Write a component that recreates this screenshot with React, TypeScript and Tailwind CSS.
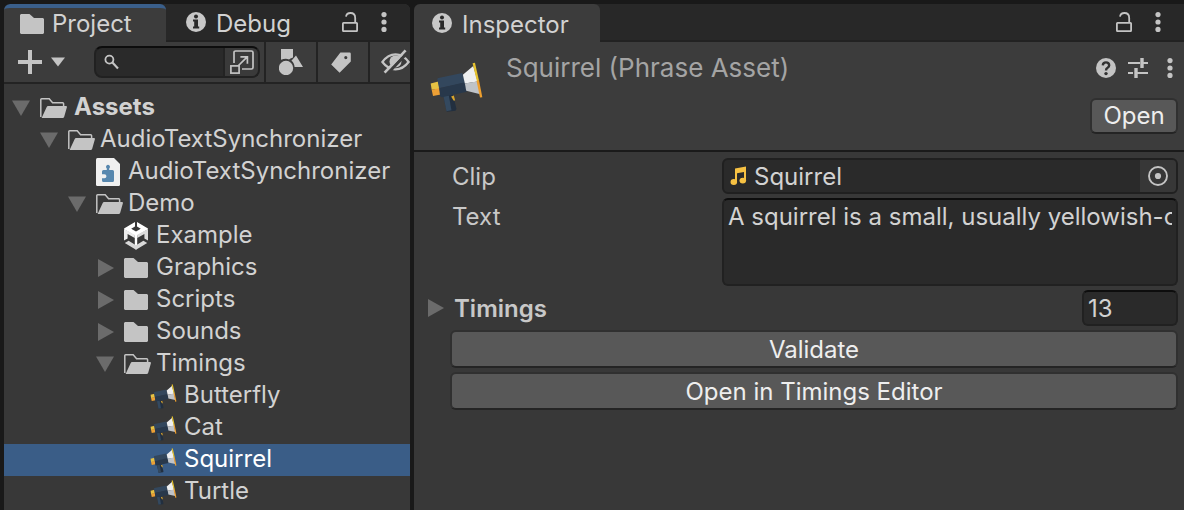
import type { ReactNode } from "react";

function FolderIcon() {
  return (
    <svg width="24" height="20" viewBox="0 0 24 20" fill="#c4c4c4" className="shrink-0">
      <path d="M1 0H9.5L14 4H23L24 5V19L23 20H1L0 19V1Z" />
    </svg>
  );
}

function FolderOpenIcon() {
  return (
    <svg width="27" height="20" viewBox="0 0 27 20" className="shrink-0">
      <path d="M.8 19V1.6Q.8.8 1.6.8H9.2L12.6 4.8H22.6Q23.6 4.8 23.6 5.8V9" fill="none" stroke="#c4c4c4" strokeWidth="1.5" />
      <path d="M6.6 9.2Q7 8 8.2 8H26Q27.2 8 26.9 9.2L24.2 18.8Q23.8 20 22.6 20H1.6Z" fill="#c4c4c4" />
    </svg>
  );
}

function InfoIcon() {
  return (
    <svg width="20" height="20" viewBox="0 0 20 20" className="shrink-0">
      <circle cx="10" cy="10" r="10" fill="#c8c8c8" />
      <circle cx="10" cy="4.4" r="2" fill="#2a2a2a" />
      <path d="M7 7.6H12V14.4H13.2V16.4H7V14.4H8.2V9.6H7Z" fill="#2a2a2a" />
    </svg>
  );
}

function LockIcon() {
  return (
    <svg width="16" height="20" viewBox="0 0 16 20" fill="none" stroke="#c4c4c4" strokeWidth="1.8">
      <rect x=".9" y="10.9" width="14.2" height="8.2" rx=".6" />
      <path d="M4 4.6Q4.6 1 8.4 1Q13.2 1 13.2 6V11" />
    </svg>
  );
}

function KebabIcon() {
  return (
    <svg width="6" height="20" viewBox="0 0 6 20" fill="#c4c4c4">
      <circle cx="3" cy="2.6" r="2.6" />
      <circle cx="3" cy="10" r="2.6" />
      <circle cx="3" cy="17.4" r="2.6" />
    </svg>
  );
}

function MegaphoneIcon({ large = false }: { large?: boolean }) {
  return (
    <svg width={large ? 53 : 27} height={large ? 50 : 25} viewBox="76 188 158 149" className="shrink-0">
      <path d="M116 290L144 284L155 328L152 333L126 336Z" fill="#222f3f" />
      <path d="M116 290L132 287L140 332L125 335Z" fill="#34495f" />
      <path d="M139 291L147 288L151 303L146 303Z" fill="#d9a52c" />
      <path d="M78 252L101 246L104 268L81 271Z" fill="#e6c243" />
      <path d="M81 271L104 266L108 285L85 289Z" fill="#eda035" />
      <path d="M98 240Q97 237 101 236L172 221L181 250L103 266Z" fill="#33475d" />
      <path d="M103 266L180 248L186 277L111 293Q107 293 106 288Z" fill="#28384b" />
      <path d="M174 226L205 200L218 246L180 252Z" fill="#eeeff0" />
      <path d="M180 252L218 245L226 284L184 274Z" fill="#bfc3c8" />
      <path d="M203 192L210 190L222 243L216 246Z" fill="#e6c32f" />
      <path d="M215 245L222 242L232 293L225 294Z" fill="#ee9f2e" />
    </svg>
  );
}

function PuzzleFileIcon() {
  return (
    <svg width="24" height="28" viewBox="0 0 24 28" className="shrink-0">
      <path d="M1.5 0H18L24 6V26.5Q24 28 22.5 28H1.5Q0 28 0 26.5V1.5Q0 0 1.5 0Z" fill="#f0f0f0" />
      <path d="M7.5 12H10.8V10.5A2 2 0 1 1 13.2 10.5V12H16.5Q18 12 18 13.5V22.5Q18 24 16.5 24H7.5Q6 24 6 22.5V20.3H8.4A2 2 0 1 0 8.4 16.2H6V13.5Q6 12 7.5 12Z" fill="#5787ae" />
    </svg>
  );
}

function UnityIcon() {
  return (
    <svg width="24" height="28" viewBox="0 0 24 28" className="shrink-0">
      <path d="M11 0V4.6L7.2 6.8L12 9.6L16.8 6.8L13 4.6V0L24 6.5L23.6 7.4L13.2 13.6V26L12 27.8L10.8 26V13.6L.4 7.4L0 6.5Z" fill="#fff" />
      <path d="M0 7V18.4L3.6 16.4V12L10.8 16V12.8Z" fill="#ececec" />
      <path d="M24 7V18.4L20.4 16.4V12L13.2 16V12.8Z" fill="#dcdcdc" />
      <path d="M.8 21L4.6 18.8L12 23.2L19.4 18.8L23.2 21L12 27.8Z" fill="#d8d8d8" />
    </svg>
  );
}

function Arrow({ open }: { open: boolean }) {
  return (
    <svg width="18" height="18" viewBox="0 0 18 18" fill="#6b6b6b" className="shrink-0">
      {open ? <path d="M0 1.5H18L9 17Z" /> : <path d="M2 0L18 9L2 18Z" />}
    </svg>
  );
}

type Row = {
  name: string;
  icon: ReactNode;
  indent: string;
  open?: boolean;
  bold?: boolean;
  selected?: boolean;
};

const rows: Row[] = [
  { name: "Assets", icon: <FolderOpenIcon />, indent: "pl-2", open: true, bold: true },
  { name: "AudioTextSynchronizer", icon: <FolderOpenIcon />, indent: "pl-9", open: true },
  { name: "AudioTextSynchronizer", icon: <PuzzleFileIcon />, indent: "pl-16" },
  { name: "Demo", icon: <FolderOpenIcon />, indent: "pl-16", open: true },
  { name: "Example", icon: <UnityIcon />, indent: "pl-[92px]" },
  { name: "Graphics", icon: <FolderIcon />, indent: "pl-[92px]", open: false },
  { name: "Scripts", icon: <FolderIcon />, indent: "pl-[92px]", open: false },
  { name: "Sounds", icon: <FolderIcon />, indent: "pl-[92px]", open: false },
  { name: "Timings", icon: <FolderOpenIcon />, indent: "pl-[92px]", open: true },
  { name: "Butterfly", icon: <MegaphoneIcon />, indent: "pl-[120px]" },
  { name: "Cat", icon: <MegaphoneIcon />, indent: "pl-[120px]" },
  { name: "Squirrel", icon: <MegaphoneIcon />, indent: "pl-[120px]", selected: true },
  { name: "Turtle", icon: <MegaphoneIcon />, indent: "pl-[120px]" },
];

function TreeRow({ row }: { row: Row }) {
  const hasArrow = row.open !== undefined;
  const isFile = !hasArrow;
  return (
    <li>
      <button
        type="button"
        className={`flex h-8 w-full items-center text-left ${row.indent} ${
          row.selected ? "bg-[#3a5d87] text-white" : "text-[#d2d2d2]"
        } ${row.bold ? "font-bold" : ""}`}
      >
        <span className="flex w-7 shrink-0">{hasArrow && <Arrow open={row.open === true} />}</span>
        <span className={`flex shrink-0 ${row.bold ? "w-[34px]" : "w-8"} ${isFile && row.indent === "pl-[120px]" ? "-ml-0.5 mr-0.5" : ""}`}>
          {row.icon}
        </span>
        <span className="pb-0.5">{row.name}</span>
      </button>
    </li>
  );
}

function ProjectPanel() {
  return (
    <section className="flex w-[406px] shrink-0 flex-col overflow-hidden rounded-t-md bg-[#383838]">
      <div className="flex h-[38px] bg-[#282828]">
        <button type="button" className="flex w-[162px] items-center gap-2 rounded-t-md border-t-4 border-[#3a5f8b] bg-[#3c3c3c] pb-0.5 pl-4">
          <FolderIcon />
          <span>Project</span>
        </button>
        <div className="flex flex-1 items-center border-b-2 border-[#222] pl-5 pr-[23px]">
          <button type="button" className="flex items-center gap-2.5">
            <InfoIcon />
            <span className="pt-1">Debug</span>
          </button>
          <button type="button" aria-label="Lock" className="ml-auto">
            <LockIcon />
          </button>
          <button type="button" aria-label="Project menu" className="ml-[23px]">
            <KebabIcon />
          </button>
        </div>
      </div>

      <div className="flex h-[42px] border-b-2 border-[#232323] bg-[#3c3c3c]">
        <button type="button" aria-label="Create" className="flex items-center gap-2 pl-3.5">
          <svg width="24" height="24" viewBox="0 0 24 24" fill="#c4c4c4">
            <path d="M10 0H14V10H24V14H14V24H10V14H0V10H10Z" />
          </svg>
          <svg width="16" height="10" viewBox="0 0 16 10" fill="#c4c4c4">
            <path d="M1 .5H15L8 9.5Z" />
          </svg>
        </button>
        <div className="my-1 ml-7 mr-1 flex flex-1 items-center overflow-hidden rounded-lg border-2 border-[#212121] border-t-[#0d0d0d] bg-[#2a2a2a]">
          <svg width="16" height="16" viewBox="0 0 16 16" fill="none" stroke="#c4c4c4" className="ml-2 shrink-0">
            <circle cx="5.4" cy="5.6" r="4" strokeWidth="1.8" />
            <path d="M8.4 8.6L14 14.4" strokeWidth="2.2" />
          </svg>
          <input aria-label="Search" className="h-full w-0 min-w-0 flex-1 bg-transparent px-1 outline-none" />
          <button type="button" aria-label="Open in search window" className="flex h-full w-[35px] items-center justify-center border-l-2 border-[#232323] bg-[#3a3a3a]">
            <svg width="24" height="24" viewBox="0 0 24 24" fill="none" stroke="#c4c4c4" strokeWidth="1.7">
              <path d="M4 13V2.6Q4 1 5.6 1H21.4Q23 1 23 2.6V17.4Q23 19 21.4 19H12" />
              <rect x=".9" y="15.9" width="8.2" height="7.2" />
              <path d="M8 16L17 7.2M10.4 6.8H17.4V13.8" />
            </svg>
          </button>
        </div>
        <button type="button" aria-label="Filter by type" className="flex w-[52px] items-center justify-center border-l-2 border-[#232323]">
          <svg width="24" height="26" viewBox="0 0 24 26" fill="#c4c4c4">
            <path d="M2 0H14V8.6Q11 9.8 10 10.6Q7 9 2 10.8Z" />
            <circle cx="7" cy="19" r="7.2" />
            <path d="M17 6.4L24 18H15.6Q15.2 13.6 12.4 11.8Z" />
          </svg>
        </button>
        <button type="button" aria-label="Filter by label" className="flex w-[52px] items-center justify-center border-l-2 border-[#232323] pr-1">
          <svg width="20" height="21" viewBox="0 0 20 21" fill="#c4c4c4" fillRule="evenodd">
            <path d="M9.4 .5H18.6Q19.8 .5 19.8 1.7V9.5L8.6 20.8L.2 12.4ZM14.8 4A1.6 1.6 0 1 0 14.8 7.2A1.6 1.6 0 1 0 14.8 4Z" />
          </svg>
        </button>
        <button type="button" aria-label="Hidden packages" className="flex w-[42px] items-center justify-end border-l-2 border-[#232323]">
          <svg width="29" height="26" viewBox="0 0 29 26" fill="none" stroke="#c4c4c4">
            <path d="M1.4 13Q7 5.4 14.5 5.4T27.6 13Q22 20.4 14.5 20.4T1.4 13Z" strokeWidth="2.2" />
            <circle cx="14.5" cy="12.4" r="6" fill="#c4c4c4" stroke="none" />
            <path d="M6.4 24.6L26.6 3.4" stroke="#3c3c3c" strokeWidth="3" />
            <path d="M3.6 23.6L24.6 1.4" strokeWidth="2.6" />
          </svg>
        </button>
      </div>

      <ul className="pt-2">
        {rows.map((row, i) => (
          <TreeRow key={i} row={row} />
        ))}
      </ul>
    </section>
  );
}

const raised =
  "rounded-md border-2 border-[#303030] border-b-[#242424] bg-[#585858] text-[#eeeeee]";

function InspectorPanel() {
  return (
    <section className="flex min-w-0 flex-1 flex-col overflow-hidden rounded-tl-md bg-[#383838]">
      <div className="flex h-[38px] bg-[#282828]">
        <button type="button" className="flex w-[186px] items-center gap-2.5 rounded-t-md bg-[#3c3c3c] pl-[18px]">
          <InfoIcon />
          <span className="pt-1">Inspector</span>
        </button>
        <div className="flex flex-1 items-center justify-end gap-[23px] border-b-2 border-[#222] pr-[23px]">
          <button type="button" aria-label="Lock">
            <LockIcon />
          </button>
          <button type="button" aria-label="Inspector menu">
            <KebabIcon />
          </button>
        </div>
      </div>

      <header className="flex h-[110px] border-b-2 border-[#1a1a1a] bg-[#3c3c3c] pl-4 pr-1.5">
        <div className="w-[76px] shrink-0 pt-5">
          <MegaphoneIcon large />
        </div>
        <h1 className="flex-1 pt-2.5 text-[26px] leading-8 text-[#a4a4a4]">Squirrel (Phrase Asset)</h1>
        <div className="flex flex-col items-end justify-between pb-4 pt-4">
          <div className="flex items-center gap-3 pr-[5px]">
            <button type="button" aria-label="Help">
              <svg width="20" height="20" viewBox="0 0 20 20">
                <circle cx="10" cy="10" r="10" fill="#c4c4c4" />
                <path d="M6.8 7.4Q7 4.4 10 4.4T13.2 7.3Q13.2 8.8 11.6 9.7T10 12.4" fill="none" stroke="#333" strokeWidth="2.4" />
                <circle cx="10" cy="15.6" r="1.7" fill="#333" />
              </svg>
            </button>
            <button type="button" aria-label="Presets">
              <svg width="20" height="20" viewBox="0 0 20 20" fill="none" stroke="#c4c4c4">
                <path d="M0 5H12M15 5H20M0 15H5M9 15H20" strokeWidth="2" />
                <path d="M14 0V10M8 10V20" strokeWidth="3.4" />
              </svg>
            </button>
            <button type="button" aria-label="Asset menu" className="pl-[7px]">
              <KebabIcon />
            </button>
          </div>
          <button type="button" className={`h-9 w-[88px] ${raised}`}>
            Open
          </button>
        </div>
      </header>

      <form className="flex flex-col pl-[38px] pr-1.5 pt-1.5 text-[#c8c8c8]" onSubmit={(e) => e.preventDefault()}>
        <div className="flex h-9 items-center">
          <label htmlFor="clip" className="w-[270px] shrink-0 pt-0.5">
            Clip
          </label>
          <div className="flex h-full min-w-0 flex-1 items-center overflow-hidden rounded-md border-2 border-[#202020] bg-[#2a2a2a]">
            <svg width="17" height="20" viewBox="0 0 17 20" fill="#f6c143" className="ml-1.5 mr-1.5 shrink-0">
              <path d="M5 2.6L16 .6V14.6H14V6L7 7.2V16H5Z" />
              <ellipse cx="3.8" cy="16" rx="3.3" ry="2.9" />
              <ellipse cx="12.8" cy="14.6" rx="3.3" ry="2.9" />
            </svg>
            <input id="clip" defaultValue="Squirrel" className="min-w-0 flex-1 bg-transparent pl-px pt-0.5 text-[#d2d2d2] outline-none" />
            <button type="button" aria-label="Pick clip" className="flex h-full w-9 items-center justify-center bg-[#373737]">
              <svg width="20" height="20" viewBox="0 0 20 20">
                <circle cx="10" cy="10" r="9" fill="none" stroke="#c4c4c4" strokeWidth="1.9" />
                <circle cx="10" cy="10" r="3.1" fill="#c4c4c4" />
              </svg>
            </button>
          </div>
        </div>

        <div className="mt-1 flex">
          <label htmlFor="text" className="w-[270px] shrink-0 pt-[3px]">
            Text
          </label>
          <div className="h-[88px] min-w-0 flex-1 rounded-md border-2 border-[#212121] border-t-[#0d0d0d] bg-[#2a2a2a] px-1">
            <textarea
              id="text"
              wrap="off"
              defaultValue="A squirrel is a small, usually yellowish-orange rodent"
              className="block h-full w-full resize-none overflow-hidden bg-transparent pt-px text-[#d2d2d2] outline-none"
            />
          </div>
        </div>

        <div className="mt-1 flex h-9 items-center">
          <button type="button" aria-label="Expand timings" className="-ml-[26px] w-7">
            <Arrow open={false} />
          </button>
          <label htmlFor="timings" className="flex-1 pt-0.5 font-semibold">
            Timings
          </label>
          <input
            id="timings"
            defaultValue="13"
            className="h-full w-24 rounded-md border-2 border-[#212121] border-t-[#0d0d0d] bg-[#2a2a2a] px-1 text-[#d2d2d2] outline-none"
          />
        </div>

        <div className="-ml-0.5 mt-1 flex flex-col gap-1">
          <button type="button" className={`h-[38px] pt-0.5 ${raised}`}>
            Validate
          </button>
          <button type="button" className={`h-[38px] pt-0.5 ${raised}`}>
            Open in Timings Editor
          </button>
        </div>
      </form>
    </section>
  );
}

export default function App() {
  return (
    <main className="flex min-h-screen gap-1 bg-[#191919] pl-1 pt-1 font-['Inter',sans-serif] text-2xl leading-8 text-[#d2d2d2]">
      <ProjectPanel />
      <InspectorPanel />
    </main>
  );
}
